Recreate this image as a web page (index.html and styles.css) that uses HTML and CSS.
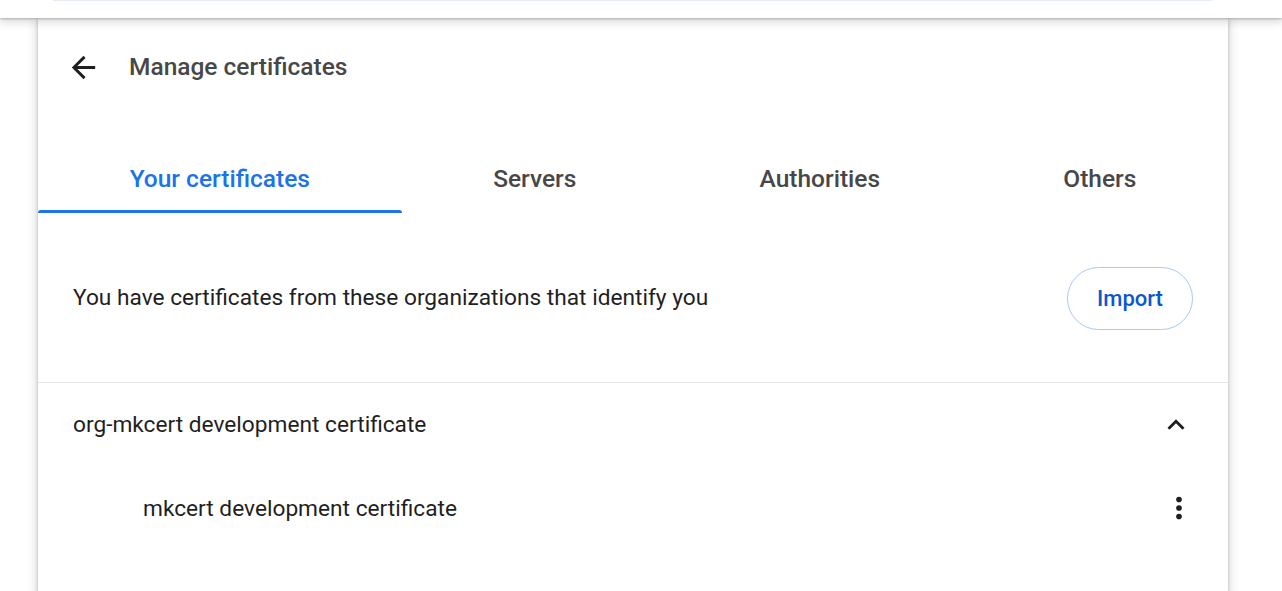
FILE: index.html
```html
<!DOCTYPE html>
<html lang="en">
<head>
<meta charset="utf-8">
<title>Manage certificates</title>
<link rel="stylesheet" href="styles.css">
</head>
<body>
<div class="toolbar"><div class="search"></div></div>
<main class="page">
  <section class="card">
    <header class="head">
      <button class="icon-btn back" aria-label="Back">
        <svg viewBox="0 0 24 24" width="35" height="35"><path d="M20 11H7.83l5.59-5.59L12 4l-8 8 8 8 1.41-1.41L7.83 13H20v-2z"/></svg>
      </button>
      <h1 class="title">Manage certificates</h1>
    </header>
    <nav class="tabs">
      <div class="tab active">Your certificates</div>
      <div class="tab">Servers</div>
      <div class="tab">Authorities</div>
      <div class="tab">Others</div>
    </nav>
    <div class="intro">
      <p class="intro-text">You have certificates from these organizations that identify you</p>
      <button class="import">Import</button>
    </div>
    <div class="group">
      <div class="group-head">
        <span class="group-name">org-mkcert development certificate</span>
        <svg class="icon chevron" viewBox="0 0 24 24" width="34" height="34"><path d="M12 8l-6 6 1.41 1.41L12 10.83l4.59 4.58L18 14z"/></svg>
      </div>
      <div class="cert">
        <span class="cert-name">mkcert development certificate</span>
        <svg class="icon more" viewBox="0 0 24 24" width="34" height="34"><circle cx="12" cy="6" r="2"/><circle cx="12" cy="12" r="2"/><circle cx="12" cy="18" r="2"/></svg>
      </div>
    </div>
  </section>
</main>
</body>
</html>
```
FILE: styles.css
```css
html, body {
  margin: 0;
  padding: 0;
  background: #ffffff;
  font-family: Roboto, "Liberation Sans", Arial, sans-serif;
  color: #1f1f1f;
  overflow: hidden;
  height: 100%;
}

.toolbar {
  position: relative;
  z-index: 2;
  height: 18px;
  background: #ffffff;
  box-shadow: 0 1px 2px rgba(60, 64, 67, 0.3), 0 3px 8px 1px rgba(60, 64, 67, 0.2);
}

.search {
  margin-left: 53px;
  width: 1159px;
  height: 1px;
  background: #e6ecf5;
}

.page {
  position: relative;
  z-index: 1;
  height: 573px;
}

.card {
  margin-left: 38px;
  width: 1190px;
  height: 100%;
  background: #ffffff;
  box-shadow: 0 1px 3px rgba(60, 64, 67, 0.3), 0 4px 8px 3px rgba(60, 64, 67, 0.15);
}

.head {
  box-sizing: border-box;
  height: 98px;
  display: flex;
  align-items: center;
  padding-left: 28px;
}

.icon-btn {
  display: flex;
  align-items: center;
  justify-content: center;
  width: 35px;
  height: 35px;
  padding: 0;
  border: 0;
  background: none;
  fill: #1f1f1f;
}

.title {
  margin: 0 0 2px 28px;
  font-size: 24.5px;
  font-weight: 500;
  color: #474747;
  letter-spacing: 0;
}

.tabs {
  margin-top: 29px;
  display: flex;
  height: 68px;
}

.tab {
  position: relative;
  box-sizing: border-box;
  flex: 1 1 auto;
  display: flex;
  align-items: center;
  justify-content: center;
  padding-bottom: 2px;
  font-size: 24.5px;
  font-weight: 500;
  color: #474747;
  white-space: nowrap;
}

.tab.active {
  color: #1a73e8;
}

.tab.active::after {
  content: "";
  position: absolute;
  left: 0;
  right: 0;
  bottom: 0;
  height: 3px;
  background: #1a73e8;
  border-radius: 3px 3px 0 0;
}

.intro {
  height: 169px;
  display: flex;
  align-items: center;
  justify-content: space-between;
  padding: 0 35px;
}

.intro-text {
  margin: 0;
  font-size: 22.7px;
  color: #1f1f1f;
}

.import {
  width: 126px;
  height: 63px;
  margin-top: 1px;
  border: 1px solid #a8c7fa;
  border-radius: 32px;
  background: #ffffff;
  color: #0b57d0;
  font-family: Roboto, "Liberation Sans", Arial, sans-serif;
  font-size: 22px;
  font-weight: 500;
  padding: 0;
}

.group {
  border-top: 1px solid #e6e6e6;
}

.group-head {
  height: 83px;
  display: flex;
  align-items: center;
  justify-content: space-between;
  padding: 0 35px 0 35px;
  font-size: 22.7px;
}

.cert {
  height: 84px;
  display: flex;
  align-items: center;
  justify-content: space-between;
  padding: 0 32px 0 105px;
  font-size: 22.7px;
}

.icon {
  fill: #1f1f1f;
  flex: none;
}
```
